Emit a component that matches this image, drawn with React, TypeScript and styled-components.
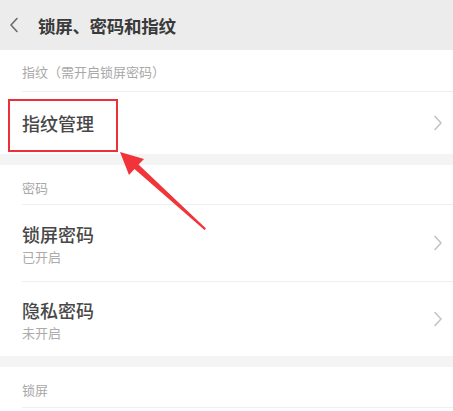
import React from "react";
import styled, { createGlobalStyle } from "styled-components";

const GlobalStyle = createGlobalStyle`
  html, body {
    margin: 0;
    padding: 0;
    background: #ffffff;
    font-family: "Noto Sans CJK SC", "Noto Sans", sans-serif;
  }
`;

const Screen = styled.div`
  position: relative;
  width: 453px;
  height: 411px;
  overflow: hidden;
  background: #f4f4f4;
`;

const Header = styled.div`
  height: 50px;
  display: flex;
  align-items: center;
  background: #ececec;
  padding-left: 9px;
  gap: 19px;
`;

const Title = styled.div`
  font-size: 17.5px;
  font-weight: 700;
  color: #3a3a3a;
  letter-spacing: -0.3px;
`;

const Group = styled.div<{ $gap?: boolean }>`
  background: #ffffff;
  margin-top: ${(p) => (p.$gap ? "11px" : "0")};
`;

const Label = styled.div<{ $h: number; $top?: number }>`
  height: ${(p) => p.$h}px;
  display: flex;
  align-items: center;
  padding-top: ${(p) => p.$top ?? 2}px;
  box-sizing: border-box;
  font-size: 13px;
  color: #a8a8a8;
`;

const Divided = styled.div`
  margin-left: 22px;
  border-bottom: 1px solid #efefef;
`;

const Row = styled.div<{ $h: number; $inset?: boolean }>`
  height: ${(p) => p.$h}px;
  display: flex;
  align-items: center;
  justify-content: space-between;
  padding: 0 10px 0 ${(p) => (p.$inset ? "0" : "22px")};
  box-sizing: border-box;
`;

const RowText = styled.div`
  display: flex;
  flex-direction: column;
`;

const RowTitle = styled.div`
  font-size: 18px;
  font-weight: 500;
  color: #474747;
  line-height: 26px;
`;

const RowSub = styled.div`
  font-size: 13px;
  color: #ababab;
  line-height: 19px;
`;

const HighlightBox = styled.div`
  position: absolute;
  left: 8px;
  top: 99px;
  width: 106px;
  height: 49px;
  border: 2.5px solid #ea3038;
`;

const Arrow = styled.svg`
  position: absolute;
  left: 0;
  top: 0;
  pointer-events: none;
`;

function Chevron({ color = "#c4c4c4", left = false }: { color?: string; left?: boolean }) {
  return (
    <svg width="10" height="16" viewBox="0 0 10 16">
      <polyline
        points={left ? "8,1.5 2,8 8,14.5" : "2,1.5 8,8 2,14.5"}
        fill="none"
        stroke={color}
        strokeWidth="1.6"
        strokeLinejoin="round"
        strokeLinecap="round"
      />
    </svg>
  );
}

export default function App() {
  return (
    <Screen>
      <GlobalStyle />
      <Header>
        <Chevron color="#6a6a6a" left />
        <Title>锁屏、密码和指纹</Title>
      </Header>

      <Group>
        <Divided>
          <Label $h={41}>指纹（需开启锁屏密码）</Label>
        </Divided>
        <Row $h={62}>
          <RowTitle>指纹管理</RowTitle>
          <Chevron />
        </Row>
      </Group>

      <Group $gap>
        <Divided>
          <Label $h={39} $top={6}>
            密码
          </Label>
        </Divided>
        <Divided>
          <Row $h={76} $inset>
            <RowText>
              <RowTitle>锁屏密码</RowTitle>
              <RowSub>已开启</RowSub>
            </RowText>
            <Chevron />
          </Row>
        </Divided>
        <Row $h={74}>
          <RowText>
            <RowTitle>隐私密码</RowTitle>
            <RowSub>未开启</RowSub>
          </RowText>
          <Chevron />
        </Row>
      </Group>

      <Group $gap>
        <Divided>
          <Label $h={40} $top={4}>
            锁屏
          </Label>
        </Divided>
        <div style={{ height: 20 }} />
      </Group>

      <HighlightBox />
      <Arrow width="453" height="411" viewBox="0 0 453 411">
        <polygon
          points="120,152 144,159 138.5,164.5 206,228.5 204.5,230 134.5,169 129,175"
          fill="#f0343a"
        />
      </Arrow>
    </Screen>
  );
}
